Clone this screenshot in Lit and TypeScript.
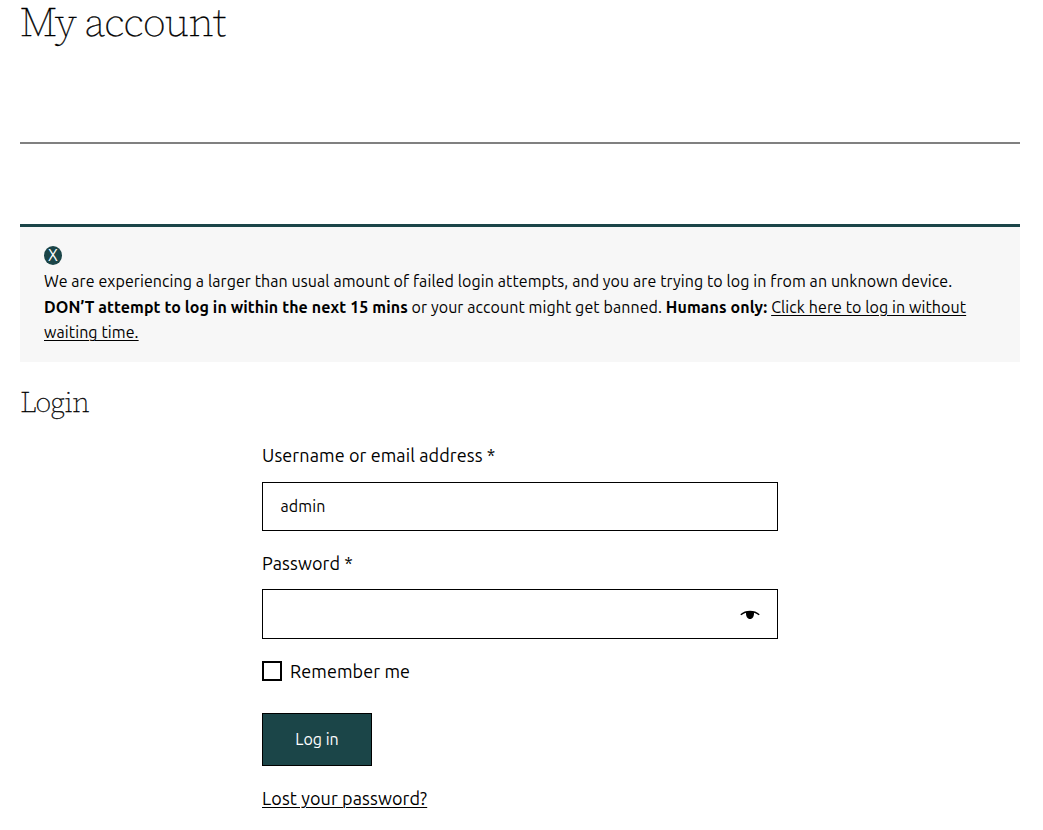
import { LitElement, html, css } from "lit";

class AppRoot extends LitElement {
  static styles = css`
    :host {
      display: block;
      box-sizing: border-box;
      width: 1043px;
      height: 830px;
      padding: 0 23px 0 20px;
      background: #fff;
      color: #000;
      font-family: Ubuntu, "Noto Sans", sans-serif;
      font-size: 16px;
    }
    * { box-sizing: border-box; }
    h1, h2 {
      margin: 0;
      font-family: "Source Serif Pro", "Source Serif 4", "Liberation Serif", serif;
      font-weight: 200;
      font-optical-sizing: none;
      -webkit-text-stroke: 0.3px #000;
    }
    h1 { height: 142px; font-size: 42px; line-height: 43px; letter-spacing: -1.2px; }
    h2 { margin-top: 21px; font-size: 29px; line-height: 38px; letter-spacing: -0.8px; }
    hr { margin: 0; border: 0; height: 2px; background: #808080; }
    .notice {
      margin-top: 80px;
      height: 138px;
      padding: 15.6px 24px 0;
      border-top: 3px solid #1b4548;
      background: #f7f7f7;
      line-height: 25.6px;
      letter-spacing: 0.083px;
      white-space: nowrap;
    }
    .badge {
      display: grid;
      place-items: center;
      width: 18px;
      height: 19px;
      margin: 3px 0 4.4px;
      border-radius: 50%;
      background: #1b4548;
      color: #fff;
      line-height: 19px;
    }
    svg { display: block; }
    a { color: inherit; text-decoration: underline 1px; text-underline-offset: 2px; }
    .mixed { letter-spacing: 0.09px; }
    form { width: 516px; margin-left: 242px; }
    label { display: block; font-size: 18px; line-height: 28px; letter-spacing: 0.1px; }
    .user { margin-top: 20px; }
    .field {
      display: flex;
      align-items: center;
      justify-content: space-between;
      height: 49px;
      margin-top: 13px;
      padding: 0 17.5px 2px 17.5px;
      border: 1px solid #000;
      letter-spacing: 0.1px;
    }
    .pass { margin-top: 18px; }
    .tall { height: 50px; margin-top: 12px; }
    .eye { margin-top: 4px; }
    .remember { display: flex; align-items: center; gap: 8px; margin-top: 18px; }
    .box { width: 20px; height: 20px; border: 2px solid #000; }
    button {
      display: block;
      width: 110px;
      height: 53px;
      margin-top: 28px;
      padding: 0 0 1px;
      border: 1px solid #000;
      background: #1b4548;
      color: #fff;
      font: inherit;
    }
    .lost { margin-top: 18px; font-size: 18px; line-height: 28px; letter-spacing: 0.1px; }
  `;

  render() {
    return html`
      <h1>My account</h1>
      <hr />
      <div class="notice">
        <div class="badge">X</div>
        <div>We are experiencing a larger than usual amount of failed login attempts, and you are trying to log in from an unknown device.</div>
        <div class="mixed"><strong>DON’T attempt to log in within the next 15 mins</strong> or your account might get banned. <strong>Humans only:</strong> <a>Click here to log in without<br />waiting time.</a></div>
      </div>
      <h2>Login</h2>
      <form @submit=${(e: Event) => e.preventDefault()}>
        <label class="user">Username or email address *</label>
        <div class="field">admin</div>
        <label class="pass">Password *</label>
        <div class="field tall">
          <span></span>
          <svg class="eye" width="20" height="10" viewBox="0 0 20 10">
            <path d="M.8 4.800C6 .400 14 .400 19.200 4.800" fill="none" stroke="#000" stroke-width="1.500" />
            <path d="M6 2Q10 .600 14 2C14.300 6.500 12.500 9 10 9S5.700 6.500 6 2" />
          </svg>
        </div>
        <label class="remember"><span class="box"></span>Remember me</label>
        <button>Log in</button>
        <div class="lost"><a>Lost your password?</a></div>
      </form>
    `;
  }
}
customElements.define("app-root", AppRoot);
